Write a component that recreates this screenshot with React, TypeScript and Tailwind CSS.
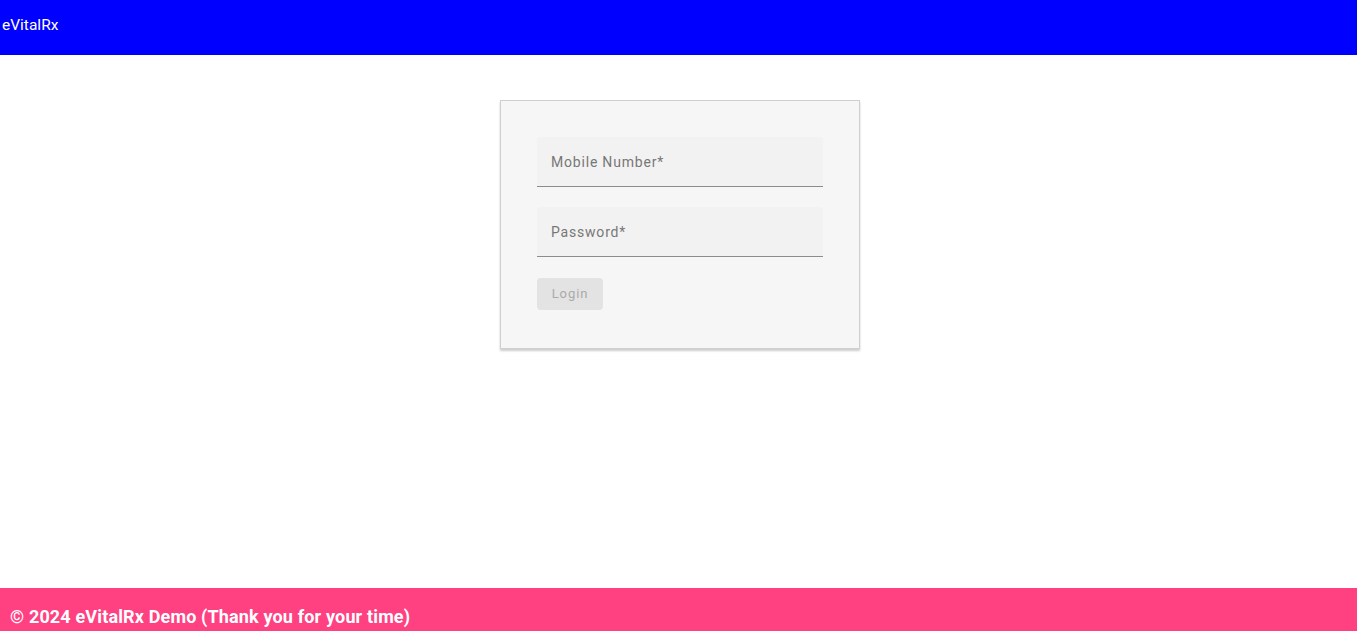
import React from "react";

export default function App() {
  return (
    <div className="h-[631px] flex flex-col bg-white overflow-hidden" style={{ fontFamily: "Roboto, 'Liberation Sans', sans-serif" }}>
      <header className="h-[55px] bg-[#0000ff] flex items-center pl-[2px] pb-[3px] shrink-0">
        <span className="text-white text-[15.5px]">eVitalRx</span>
      </header>
      <main className="flex-1 flex justify-center pt-[45px] pl-[3px]">
        <div className="w-[360px] h-[249px] bg-[#f6f6f6] border border-[#cfcfcf] shadow-[0_2px_2px_rgba(0,0,0,0.2)] px-[36px] pt-[36px] flex flex-col">
          <div className="h-[50px] bg-[#f2f2f2] border-b border-[#8c8c8c] rounded-t-[4px] flex items-center pl-[14px] pt-[1px]">
            <span className="text-[14px] text-[#777777] tracking-[0.8px]">Mobile Number*</span>
          </div>
          <div className="h-[50px] mt-[20px] bg-[#f2f2f2] border-b border-[#8c8c8c] rounded-t-[4px] flex items-center pl-[14px] pt-[1px]">
            <span className="text-[14px] text-[#777777] tracking-[0.8px]">Password*</span>
          </div>
          <div className="mt-[21px]">
            <button className="w-[66px] h-[32px] bg-[#e3e3e3] rounded-[4px] text-[13px] text-[#aaaaaa] tracking-[0.9px]">Login</button>
          </div>
        </div>
      </main>
      <footer className="h-[43px] bg-[#ff4081] shrink-0 pl-[10px] pt-[16px]">
        <span className="text-white font-bold text-[18px] leading-[26px] tracking-[0.15px]">© 2024 eVitalRx Demo (Thank you for your time)</span>
      </footer>
    </div>
  );
}
